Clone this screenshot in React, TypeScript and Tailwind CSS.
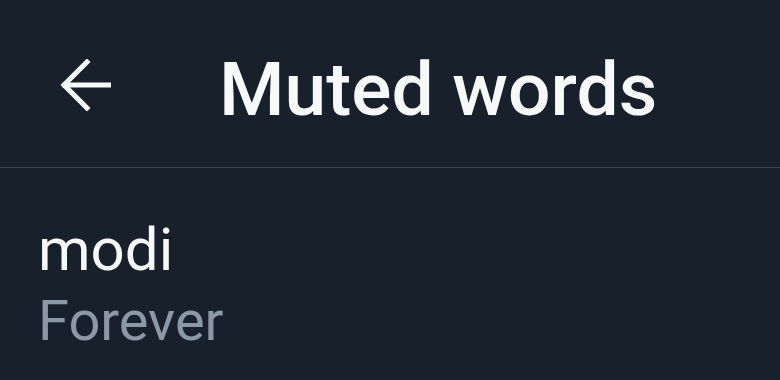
import React from "react";

const BackArrow = () => (
  <svg width="52" height="52" viewBox="0 0 52 52" fill="none" stroke="#f7f9f9" strokeWidth="5" strokeLinecap="square">
    <path d="M50 26H6" />
    <path d="M28 3L5 26l23 23" strokeLinejoin="miter" />
  </svg>
);

export default function App() {
  return (
    <div className="w-[780px] h-[380px] bg-[#18212b] text-[#f7f9f9] font-['Roboto',sans-serif] overflow-hidden">
      <div className="h-[168px] border-b border-[#38444d] flex items-center">
        <div className="w-[219px] pl-[59px] pt-[2px]">
          <BackArrow />
        </div>
        <h1 className="text-[75px] leading-none font-medium pt-[12px]">Muted words</h1>
      </div>
      <div className="pl-[38px] pt-[47px]">
        <div className="text-[60px] leading-[70px]">modi</div>
        <div className="text-[56px] leading-[72px] text-[#8b98a5]">Forever</div>
      </div>
    </div>
  );
}
